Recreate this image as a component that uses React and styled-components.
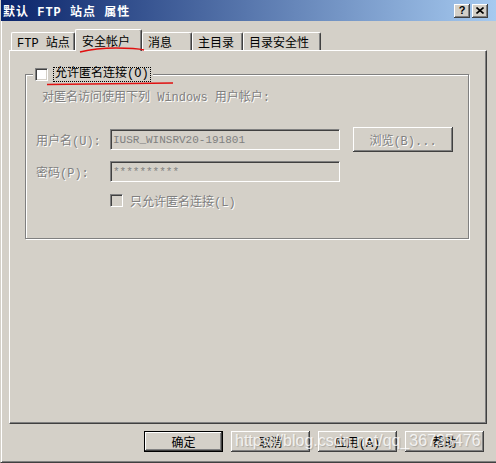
import React from 'react'
import styled, { createGlobalStyle } from 'styled-components'

const GlobalStyle = createGlobalStyle`
  html, body {
    margin: 0;
    padding: 0;
    background: #d4d0c8;
  }
  body {
    font-family: "Liberation Mono", "Noto Sans CJK SC", monospace;
    font-size: 12px;
    color: #000;
  }
`

const Window = styled.div`
  position: relative;
  width: 496px;
  height: 463px;
  box-sizing: border-box;
  overflow: hidden;
  background: #d4d0c8;
  border-left: 1px solid #d4d0c8;
  border-bottom: 1px solid #404040;
  box-shadow: inset 1px 0 #fff, inset 0 -1px #808080;
  display: flex;
  flex-direction: column;
`

const TitleBar = styled.div`
  height: 21px;
  flex: none;
  display: flex;
  align-items: center;
  padding: 0 8px 0 2px;
  background: linear-gradient(to right, #0a246a, #a6caf0);
`

const Caption = styled.span`
  flex: 1;
  color: #fff;
  font-weight: bold;
  letter-spacing: 1px;
  white-space: pre;
`

const CaptionButton = styled.div`
  width: 16px;
  height: 14px;
  margin-left: 2px;
  box-sizing: border-box;
  background: #d4d0c8;
  box-shadow: inset -1px -1px #404040, inset 1px 1px #fff, inset -2px -2px #808080;
  display: flex;
  align-items: center;
  justify-content: center;
  font: bold 11px "Liberation Sans", sans-serif;
  line-height: 1;
`

const Body = styled.div`
  flex: 1;
  display: flex;
  flex-direction: column;
  padding: 8px 9px 0 8px;
`

const TabStrip = styled.div`
  position: relative;
  z-index: 1;
  height: 21px;
  display: flex;
  align-items: flex-end;
  padding-left: 2px;
`

const Tab = styled.div`
  box-sizing: border-box;
  width: ${p => p.$w}px;
  height: ${p => (p.$active ? 22 : 18)}px;
  margin-bottom: ${p => (p.$active ? -1 : 0)}px;
  padding-left: ${p => (p.$active ? 6 : 5)}px;
  display: flex;
  align-items: center;
  background: #d4d0c8;
  border-top: 1px solid #fff;
  border-left: 1px solid #fff;
  border-right: 1px solid #404040;
  box-shadow: inset -1px 0 #808080;
  border-radius: 2px 2px 0 0;
  white-space: pre;
`

const Panel = styled.div`
  height: 374px;
  box-sizing: border-box;
  border: 1px solid;
  border-color: #fff #404040 #404040 #fff;
  box-shadow: inset -1px -1px #808080;
  padding: 23px 0 0 15px;
`

const Group = styled.div`
  width: 444px;
  height: 165px;
  box-sizing: border-box;
  border: 1px solid #808080;
  box-shadow: 1px 1px 0 #fff, inset 1px 1px 0 #fff;
  padding: 0 10px;
  display: flex;
  flex-direction: column;
`

const Legend = styled.div`
  align-self: flex-start;
  display: flex;
  align-items: center;
  height: 15px;
  margin: -8px 0 0 -3px;
  padding: 0 2px;
  background: #d4d0c8;
`

const Check = styled.span`
  width: 13px;
  height: 13px;
  flex: none;
  box-sizing: border-box;
  border: 1px solid;
  border-color: #808080 #fff #fff #808080;
  box-shadow: inset 1px 1px #404040, inset -1px -1px #d4d0c8;
  background: ${p => (p.$disabled ? '#d4d0c8' : '#fff')};
`

const FocusLabel = styled.span`
  margin-left: 5px;
  padding: 0 1px;
  line-height: 13px;
  border: 1px dotted #000;
  white-space: pre;
`

const Dim = styled.span`
  color: #808080;
  text-shadow: 1px 1px 0 #fff;
  white-space: pre;
`

const Description = styled(Dim)`
  display: block;
  margin: 9px 0 0 6px;
  line-height: 14px;
`

const Row = styled.div`
  display: flex;
  align-items: center;
  height: ${p => p.$h}px;
  margin-top: ${p => p.$top}px;
`

const FieldLabel = styled(Dim)`
  width: 74px;
  flex: none;
`

const Field = styled.input`
  width: 230px;
  height: 21px;
  box-sizing: border-box;
  margin: 0;
  padding: 0 0 0 2px;
  border: 1px solid;
  border-color: #808080 #fff #fff #808080;
  box-shadow: inset 1px 1px #404040, inset -1px -1px #d4d0c8;
  background: #d4d0c8;
  color: #808080;
  font: 11px "Liberation Mono", monospace;
  outline: none;
`

const Button = styled.button`
  box-sizing: border-box;
  width: ${p => p.$w || 79}px;
  height: ${p => p.$h || 21}px;
  margin: 0;
  padding: 0;
  font: inherit;
  background: #d4d0c8;
  color: ${p => (p.disabled ? '#808080' : '#000')};
  text-shadow: ${p => (p.disabled ? '1px 1px 0 #fff' : 'none')};
  border: ${p => (p.$primary ? '1px solid #000' : 'none')};
  border-radius: 0;
  box-shadow: inset -1px -1px #404040, inset 1px 1px #fff, inset -2px -2px #808080;
  white-space: pre;
  cursor: default;
`

const BrowseButton = styled(Button)`
  margin-left: 13px;
`

const OnlyAnon = styled.div`
  display: flex;
  align-items: center;
  margin: 12px 0 0 74px;
  height: 13px;
`

const CheckText = styled(Dim)`
  margin-left: 7px;
`

const Footer = styled.div`
  display: flex;
  justify-content: flex-end;
  gap: 8px;
  margin: 7px 3px 0 0;
`

const Marks = styled.svg`
  position: absolute;
  z-index: 2;
  left: 0;
  top: 0;
  pointer-events: none;
`

const Watermark = styled.div`
  position: absolute;
  z-index: 3;
  left: 234px;
  top: 433px;
  font: 16px/16px "Liberation Sans", Arial, sans-serif;
  color: rgba(255, 255, 255, 0.8);
  text-shadow: 1px 1px 1px rgba(0, 0, 0, 0.18);
  pointer-events: none;
  white-space: nowrap;
`

const tabs = [
  { label: 'FTP 站点', w: 64 },
  { label: '安全帐户', w: 67, active: true },
  { label: '消息', w: 50 },
  { label: '主目录', w: 51 },
  { label: '目录安全性', w: 78 },
]

const App = () => {
  return (
    <>
      <GlobalStyle />
      <Window>
        <TitleBar>
          <Caption>默认 FTP 站点 属性</Caption>
          <CaptionButton>?</CaptionButton>
          <CaptionButton>
            <svg width="8" height="7" viewBox="0 0 8 7">
              <path d="M0.5 0.5 L7.5 6.5 M7.5 0.5 L0.5 6.5" stroke="#000" strokeWidth="1.6" />
            </svg>
          </CaptionButton>
        </TitleBar>
        <Body>
          <TabStrip>
            {tabs.map(t => (
              <Tab key={t.label} $w={t.w} $active={t.active}>{t.label}</Tab>
            ))}
          </TabStrip>
          <Panel>
            <Group>
              <Legend>
                <Check />
                <FocusLabel>允许匿名连接(O)</FocusLabel>
              </Legend>
              <Description>对匿名访问使用下列 Windows 用户帐户:</Description>
              <Row $h={25} $top={22}>
                <FieldLabel>用户名(U):</FieldLabel>
                <Field disabled defaultValue="IUSR_WINSRV20-191801" />
                <BrowseButton disabled $w={100} $h={25}>浏览(B)...</BrowseButton>
              </Row>
              <Row $h={21} $top={9}>
                <FieldLabel>密码(P):</FieldLabel>
                <Field disabled defaultValue="**********" />
              </Row>
              <OnlyAnon>
                <Check $disabled />
                <CheckText>只允许匿名连接(L)</CheckText>
              </OnlyAnon>
            </Group>
          </Panel>
          <Footer>
            <Button $primary>确定</Button>
            <Button>取消</Button>
            <Button>应用(A)</Button>
            <Button>帮助</Button>
          </Footer>
        </Body>
        <Marks width="496" height="463">
          <path d="M79 52 Q95 48 115 48 T143 50" fill="none" stroke="#e01010" strokeWidth="1.5" />
          <path d="M46 84.5 Q110 84 172 83" fill="none" stroke="#e01010" strokeWidth="1.5" />
        </Marks>
        <Watermark>https://blog.csdn.net/qq_36735476</Watermark>
      </Window>
    </>
  )
}

export default App
